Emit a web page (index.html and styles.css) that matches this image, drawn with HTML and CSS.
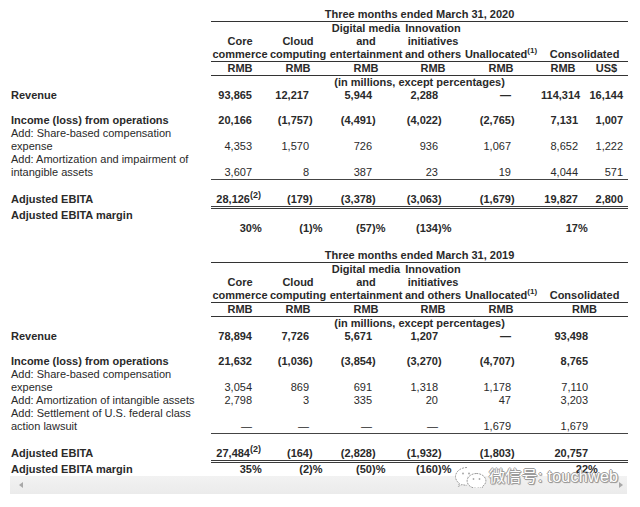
FILE: index.html
```html
<!DOCTYPE html>
<html>
<head>
<meta charset="utf-8">
<title>Adjusted EBITA</title>
<link rel="stylesheet" href="styles.css">
</head>
<body>
<div class="page">
  <table class="fin">
    <colgroup><col class="cl"><col class="c1"><col class="c2"><col class="c3"><col class="c4"><col class="c5"><col class="c6"><col class="c7"></colgroup>
    <tr class="title"><td></td><td colspan="7">Three months ended March 31, 2020</td></tr>
    <tr class="head"><td></td><td>Core<br>commerce</td><td>Cloud<br>computing</td><td>Digital media<br>and<br>entertainment</td><td>Innovation<br>initiatives<br>and others</td><td>Unallocated<sup class="hs">(1)</sup></td><td colspan="2">Consolidated</td></tr>
    <tr class="unit"><td></td><td>RMB</td><td>RMB</td><td>RMB</td><td>RMB</td><td>RMB</td><td>RMB</td><td>US$</td></tr>
    <tr class="note"><td></td><td colspan="7">(in millions, except percentages)</td></tr>
    <tr class="row b"><td>Revenue</td><td>93,865</td><td>12,217</td><td>5,944</td><td>2,288</td><td>—</td><td>114,314</td><td>16,144</td></tr>
    <tr class="gap"><td colspan="8"></td></tr>
    <tr class="row b"><td>Income (loss) from operations</td><td>20,166</td><td>(1,757<span class="hang">)</span></td><td>(4,491<span class="hang">)</span></td><td>(4,022<span class="hang">)</span></td><td>(2,765<span class="hang">)</span></td><td>7,131</td><td>1,007</td></tr>
    <tr class="row"><td>Add: Share-based compensation<br>expense</td><td>4,353</td><td>1,570</td><td>726</td><td>936</td><td>1,067</td><td>8,652</td><td>1,222</td></tr>
    <tr class="row ul"><td>Add: Amortization and impairment of<br>intangible assets</td><td>3,607</td><td>8</td><td>387</td><td>23</td><td>19</td><td>4,044</td><td>571</td></tr>
    <tr class="row b tot"><td>Adjusted EBITA</td><td>28,126<sup class="fn">(2)</sup></td><td>(179<span class="hang">)</span></td><td>(3,378<span class="hang">)</span></td><td>(3,063<span class="hang">)</span></td><td>(1,679<span class="hang">)</span></td><td>19,827</td><td>2,800</td></tr>
    <tr class="row b mg"><td>Adjusted EBITA margin</td><td>30<span class="hang">%</span></td><td>(1<span class="hang">)%</span></td><td>(57<span class="hang">)%</span></td><td>(134<span class="hang">)%</span></td><td></td><td>17<span class="hang">%</span></td><td></td></tr>
  </table>

  <table class="fin t2">
    <colgroup><col class="cl"><col class="c1"><col class="c2"><col class="c3"><col class="c4"><col class="c5"><col class="c6"><col class="c7"></colgroup>
    <tr class="title"><td></td><td colspan="7">Three months ended March 31, 2019</td></tr>
    <tr class="head"><td></td><td>Core<br>commerce</td><td>Cloud<br>computing</td><td>Digital media<br>and<br>entertainment</td><td>Innovation<br>initiatives<br>and others</td><td>Unallocated<sup class="hs">(1)</sup></td><td colspan="2">Consolidated</td></tr>
    <tr class="unit"><td></td><td>RMB</td><td>RMB</td><td>RMB</td><td>RMB</td><td>RMB</td><td colspan="2">RMB</td></tr>
    <tr class="note"><td></td><td colspan="7">(in millions, except percentages)</td></tr>
    <tr class="row b"><td>Revenue</td><td>78,894</td><td>7,726</td><td>5,671</td><td>1,207</td><td>—</td><td colspan="2">93,498</td></tr>
    <tr class="gap"><td colspan="8"></td></tr>
    <tr class="row b"><td>Income (loss) from operations</td><td>21,632</td><td>(1,036<span class="hang">)</span></td><td>(3,854<span class="hang">)</span></td><td>(3,270<span class="hang">)</span></td><td>(4,707<span class="hang">)</span></td><td colspan="2">8,765</td></tr>
    <tr class="row"><td>Add: Share-based compensation<br>expense</td><td>3,054</td><td>869</td><td>691</td><td>1,318</td><td>1,178</td><td colspan="2">7,110</td></tr>
    <tr class="row"><td>Add: Amortization of intangible assets</td><td>2,798</td><td>3</td><td>335</td><td>20</td><td>47</td><td colspan="2">3,203</td></tr>
    <tr class="row ul"><td>Add: Settlement of U.S. federal class<br>action lawsuit</td><td>—</td><td>—</td><td>—</td><td>—</td><td>1,679</td><td colspan="2">1,679</td></tr>
    <tr class="row b tot"><td>Adjusted EBITA</td><td>27,484<sup class="fn">(2)</sup></td><td>(164<span class="hang">)</span></td><td>(2,828<span class="hang">)</span></td><td>(1,932<span class="hang">)</span></td><td>(1,803<span class="hang">)</span></td><td colspan="2">20,757</td></tr>
    <tr class="row b"><td>Adjusted EBITA margin</td><td>35<span class="hang">%</span></td><td>(2<span class="hang">)%</span></td><td>(50<span class="hang">)%</span></td><td>(160<span class="hang">)%</span></td><td></td><td colspan="2">22<span class="hang">%</span></td></tr>
  </table>

  <div class="hscroll"><span class="arr left"></span><span class="arr right"></span></div>

  <div class="wm">
    <svg class="wm-icon" width="34" height="22" viewBox="0 0 34 22">
      <path d="M13 1.5C6.6 1.5 1.5 5.6 1.5 10.6c0 2.8 1.5 5.2 3.9 6.8l-1 3 3.6-1.9c1.5.5 3.2.8 5 .8" fill="#fff" stroke="#9a9a9a" stroke-width="1" stroke-dasharray="2 1"/>
      <path d="M22.5 7.5c-5.2 0-9.4 3.4-9.4 7.4s4.2 7.4 9.4 7.4c1.2 0 2.4-.2 3.5-.6l2.8 1.4-.7-2.4c2.3-1.4 3.8-3.5 3.8-5.8 0-4-4.2-7.4-9.4-7.4z" fill="#fff" stroke="#9a9a9a" stroke-width="1" stroke-dasharray="2 1"/>
      <circle cx="9" cy="7.5" r="1" fill="#aaa"/>
      <circle cx="15" cy="7.5" r="1" fill="#aaa"/>
      <circle cx="19.5" cy="13" r=".9" fill="#aaa"/>
      <circle cx="25.5" cy="13" r=".9" fill="#aaa"/>
    </svg>
    <span class="wm-text">微信号: touchweb</span>
  </div>
</div>
</body>
</html>
```

FILE: styles.css
```css
html, body {
  margin: 0;
  padding: 0;
  background: #ffffff;
}

body {
  font-family: "Liberation Sans", Arial, sans-serif;
  font-size: 11px;
  line-height: 13px;
  color: #2a2a2a;
}

.page {
  position: relative;
  width: 640px;
  height: 507px;
  overflow: hidden;
  padding-top: 8px;
  box-sizing: border-box;
}

/* ---------- financial tables ---------- */
.fin {
  border-collapse: separate;
  border-spacing: 0;
  table-layout: fixed;
  width: 628px;
}

.t2 {
  margin-top: 14px;
}

.cl { width: 211px; }
.c1 { width: 58px; }
.c2 { width: 58px; }
.c3 { width: 78px; }
.c4 { width: 56px; }
.c5 { width: 80px; }
.c6 { width: 44px; }
.c7 { width: 43px; }

.fin td {
  padding: 0;
  white-space: nowrap;
  vertical-align: bottom;
}

.title td,
.head td,
.unit td,
.note td {
  font-weight: bold;
  text-align: center;
}

.title td + td,
.head td + td,
.unit td + td {
  border-bottom: 1px solid #333;
}

.hs {
  font-size: 8px;
  line-height: 0;
  vertical-align: super;
}

/* number rows */
.row td:first-child {
  padding-left: 11px;
  text-align: left;
  vertical-align: top;
}

.row td + td {
  text-align: right;
}

.row td:nth-child(2) { padding-right: 17px; }
.row td:nth-child(3) { padding-right: 18px; }
.row td:nth-child(4) { padding-right: 33px; }
.row td:nth-child(5) { padding-right: 23px; }
.row td:nth-child(6) { padding-right: 30px; }
.row td:nth-child(7) { padding-right: 7px; }
.row td:nth-child(8) { padding-right: 5px; }
.t2 .row td:nth-child(7) { padding-right: 40px; }

.b td {
  font-weight: bold;
}

.gap td {
  height: 12px;
}

.ul td {
  border-bottom: 1px solid transparent;
}

.ul td + td {
  border-bottom-color: #444;
}

.tot td {
  padding-top: 13px;
  vertical-align: top;
}

.tot td + td {
  border-bottom: 3px double #3a3a3a;
}

.mg td + td {
  padding-top: 13px;
}

.hang {
  display: inline-block;
  width: 0;
  text-align: left;
}

.fn {
  font-size: 9px;
  line-height: 0;
  vertical-align: super;
  margin-right: -9px;
}

/* ---------- horizontal scrollbar strip ---------- */
.hscroll {
  margin-left: 10px;
  width: 617px;
  height: 18px;
  background: linear-gradient(#f2f2f2, #ebebeb);
  display: flex;
  align-items: center;
  justify-content: space-between;
  padding: 0 4px 0 9px;
  box-sizing: border-box;
}

.arr {
  width: 0;
  height: 0;
  border-top: 3.5px solid transparent;
  border-bottom: 3.5px solid transparent;
}

.arr.left {
  border-right: 4px solid #a8a8a8;
}

.arr.right {
  border-left: 4px solid #a8a8a8;
}

/* ---------- watermark overlay ---------- */
.wm {
  position: absolute;
  left: 454px;
  top: 466px;
  display: flex;
  align-items: center;
  gap: 1px;
}

.wm-text {
  font-family: "Liberation Sans", "Noto Sans CJK SC", sans-serif;
  font-size: 16px;
  line-height: 20px;
  color: #ffffff;
  letter-spacing: 0.3px;
  text-shadow: 1px 0 0 #9c9c9c, -1px 0 0 #9c9c9c, 0 1px 0 #9c9c9c, 0 -1px 0 #9c9c9c, 1px 1px 1px #888;
}
```
